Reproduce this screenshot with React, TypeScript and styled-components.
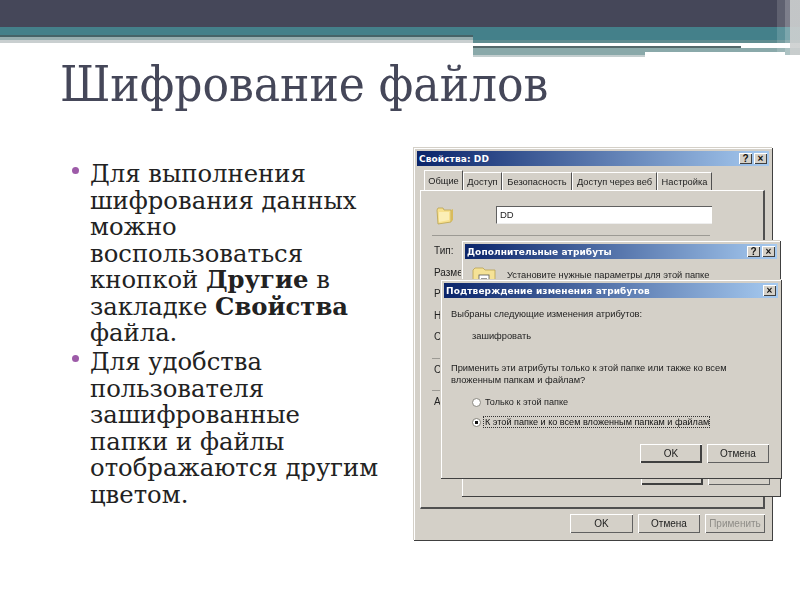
import React from 'react'
import styled, { createGlobalStyle } from 'styled-components'

const GlobalStyle = createGlobalStyle`
  html, body {
    margin: 0;
    padding: 0;
    width: 800px;
    height: 600px;
    overflow: hidden;
    background: #fff;
  }
`

const Slide = styled.div`
  width: 800px;
  height: 600px;
  overflow: hidden;
  background: #fff;
`

// top ribbon
const Ribbon = styled.header`
  position: relative;
  height: 57px;
`

const TopBand = styled.div`
  height: 27px;
  background: #454759;
`

const RibbonRow = styled.div`
  display: flex;
  align-items: flex-start;
`

const RibbonLeft = styled.div`
  width: 473px;
  flex: none;
`

const RibbonRight = styled.div`
  flex: 1;
`

const Band = styled.div<{ $h: number; $c: string; $w?: number; $ml?: number }>`
  height: ${({ $h }) => $h}px;
  background: ${({ $c }) => $c};
  width: ${({ $w }) => ($w ? `${$w}px` : 'auto')};
  margin-left: ${({ $ml }) => $ml || 0}px;
`

const LowerBand = styled.div`
  height: 7px;
  background: #8aa9aa;
  padding-top: 4px;
  box-sizing: border-box;
`

const RibbonEnd = styled.div`
  position: absolute;
  top: 0;
  right: 0;
  width: 23px;
  height: 55px;
  background: linear-gradient(90deg, rgba(255,255,255,.14) 0 8px, rgba(255,255,255,.3) 8px 13px, rgba(205,208,208,.92) 13px);
`

const Title = styled.h1`
  margin: 0;
  height: 91px;
  padding: 1px 0 0 60px;
  box-sizing: border-box;
  font-family: 'DejaVu Serif', serif;
  font-stretch: condensed;
  font-weight: 400;
  font-size: 49px;
  line-height: 54px;
  color: #454759;
`

const Content = styled.main`
  display: flex;
`

const TextColumn = styled.ul`
  width: 342px;
  flex: none;
  box-sizing: border-box;
  margin: 0;
  padding: 13px 32px 0 18px;
  margin-left: 72px;
  list-style: none;
  font-family: 'DejaVu Serif', serif;
  font-size: 24.3px;
  line-height: 26.5px;
  color: #222;
`

const Item = styled.li`
  position: relative;
  margin-bottom: 2.7px;

  &::before {
    content: '';
    position: absolute;
    left: -18px;
    top: 6px;
    width: 7px;
    height: 7px;
    border-radius: 50%;
    background: #9d5ba8;
  }
`

// dialogs
const Stage = styled.div`
  position: relative;
  width: 370px;
  height: 394px;
  font-family: 'Liberation Sans', sans-serif;
  font-size: 9.3px;
  color: #222;
  filter: blur(0.35px);
`

const Win = styled.section<{ $x: number; $y: number; $w: number; $h: number }>`
  position: absolute;
  left: ${({ $x }) => $x}px;
  top: ${({ $y }) => $y}px;
  width: ${({ $w }) => $w}px;
  height: ${({ $h }) => $h}px;
  box-sizing: border-box;
  padding: 3px;
  display: flex;
  flex-direction: column;
  background: #d4d0c8;
  border-right: 1px solid #404040;
  border-bottom: 1px solid #404040;
  box-shadow: inset 1px 1px 0 #fff, -1px -1px 0 #d4d0c8;
`

const TitleBar = styled.div`
  height: 15px;
  flex: none;
  display: flex;
  align-items: center;
  justify-content: flex-end;
  gap: 2px;
  padding: 0 2px;
  position: relative;
  background: linear-gradient(90deg, #0a246a, #a6caf0);
`

const TitleText = styled.span`
  margin-right: auto;
  font-family: 'DejaVu Sans', sans-serif;
  font-weight: 700;
  font-size: 9px;
  color: #fff;
  letter-spacing: 0.1px;
`

const TitleBtn = styled.span`
  width: 13px;
  height: 11px;
  display: flex;
  align-items: center;
  justify-content: center;
  font-family: 'Liberation Sans', sans-serif;
  font-weight: 700;
  font-size: 10px;
  line-height: 1;
  color: #111;
  background: #d4d0c8;
  box-shadow: inset 1px 1px 0 #fff, inset -1px -1px 0 #404040;
`

const Tabs = styled.div`
  display: flex;
  align-items: flex-end;
  height: 24px;
  padding: 5px 0 0 7px;
  box-sizing: border-box;
  flex: none;
`

const Tab = styled.div<{ $active?: boolean; $w: number }>`
  width: ${({ $w }) => $w}px;
  height: ${({ $active }) => ($active ? 20 : 18)}px;
  display: flex;
  align-items: center;
  justify-content: center;
  box-sizing: border-box;
  border-right: 1px solid #505050;
  border-top: 1px solid #fff;
  border-left: 1px solid #fff;
  white-space: nowrap;
`

const Panel = styled.div`
  flex: 1;
  margin: 0 4px 0 3px;
  padding: 14px 11px 0 11px;
  border-top: 1px solid #fff;
  border-left: 1px solid #fff;
  border-right: 2px solid #505050;
  border-bottom: 2px solid #505050;
`

const NameRow = styled.div`
  display: flex;
  align-items: center;
  gap: 41px;
  padding-left: 3px;
  height: 20px;
`

const NameInput = styled.div`
  width: 216px;
  height: 18px;
  box-sizing: border-box;
  padding: 2px 3px;
  background: #fff;
  border-top: 1px solid #606060;
  border-left: 1px solid #606060;
  border-bottom: 1px solid #eee;
  font-size: 9.5px;
`

const Rule = styled.hr<{ $w: number }>`
  width: ${({ $w }) => $w}px;
  height: 1px;
  margin: 10px 0 0;
  border: 0;
  background: #9c9a94;
`

const PropRow = styled.div`
  height: 21.5px;
  display: flex;
  align-items: center;
  padding-left: 2px;
  font-size: 10px;
`

const PropList = styled.div`
  margin-top: 4px;
`

const Buttons = styled.div<{ $pr: number; $pb: number }>`
  display: flex;
  justify-content: flex-end;
  gap: 5px;
  flex: none;
  padding: 0 ${({ $pr }) => $pr}px ${({ $pb }) => $pb}px 0;
`

const Btn = styled.div<{ $w: number; $off?: boolean; $def?: boolean }>`
  width: ${({ $w }) => $w}px;
  height: 19px;
  display: flex;
  align-items: center;
  justify-content: center;
  font-size: 10px;
  color: ${({ $off }) => ($off ? '#8f8d88' : '#222')};
  box-shadow: ${({ $def }) =>
    $def
      ? 'inset 1px 1px 0 #fff, inset -2px -2px 0 #404040'
      : 'inset 1px 1px 0 #fff, inset -1px -1px 0 #606060'};
`

const FooterGap = styled.div`
  height: 5px;
  flex: none;
`

const Spring = styled.div`
  flex: 1;
`

const Intro = styled.div`
  display: flex;
  align-items: center;
  gap: 10px;
  padding: 8px 0 0 6px;
`

const Body = styled.div`
  flex: 1;
  display: flex;
  flex-direction: column;
  padding: 10px 0 0 7px;
`

const Line = styled.p<{ $top?: number; $indent?: number }>`
  margin: ${({ $top }) => $top || 0}px 0 0 ${({ $indent }) => $indent || 0}px;
  line-height: 12px;
  white-space: nowrap;
`

const RadioRow = styled.div<{ $top: number }>`
  display: flex;
  align-items: center;
  gap: 3px;
  margin: ${({ $top }) => $top}px 0 0 21px;
  height: 14px;
`

const Radio = styled.span<{ $on?: boolean }>`
  width: 7px;
  height: 7px;
  flex: none;
  border-radius: 50%;
  background: ${({ $on }) =>
    $on ? 'radial-gradient(circle, #111 0 1.6px, #fff 2px)' : '#fff'};
  border: 1px solid #8a8880;
`

const RadioLabel = styled.span<{ $focus?: boolean }>`
  padding: 0 0 0 1px;
  outline: ${({ $focus }) => ($focus ? '1px dotted #333' : 'none')};
  white-space: nowrap;
  font-size: 9.1px;
  color: ${({ $focus }) => ($focus ? '#111' : '#222')};
`

function FolderIcon({ size }: { size: number }) {
  return (
    <svg width={size} height={size} viewBox="0 0 20 20">
      <path d="M2 5 L3 3 H8 L9 5 H16 L16 17 L3 19 Z" fill="#f7e08e" stroke="#b9a24e" strokeWidth="0.8" />
      <path d="M16 5 L18 4 V15 L16 17 Z" fill="#d8bb5c" />
      <path d="M4 7 H14 V15 L4 17 Z" fill="#fbeeb6" />
    </svg>
  )
}

function EncryptFolderIcon() {
  return (
    <svg width="26" height="16" viewBox="0 0 26 16">
      <path d="M2 3 L4 1 H12 L14 3 H24 V16 H2 Z" fill="#f5e296" stroke="#b9a24e" strokeWidth="0.8" />
      <rect x="8" y="8" width="10" height="8" fill="#fff" stroke="#555" strokeWidth="0.8" />
      <path d="M10 12 H16" stroke="#333" />
    </svg>
  )
}

export default function App() {
  return (
    <Slide>
      <GlobalStyle />
      <Ribbon>
        <TopBand />
        <RibbonRow>
          <RibbonLeft>
            <Band $h={8} $c="#44808a" />
            <Band $h={2} $c="#466368" />
            <Band $h={3} $c="#97aeb0" />
            <Band $h={3} $c="#c9cfd0" />
          </RibbonLeft>
          <RibbonRight>
            <Band $h={13} $c="#44808a" />
            <Band $h={3} $c="#5f8c90" />
            <Band $h={3} $c="#fff" $w={268} />
            <Band $h={2} $c="#54696b" $w={268} />
            <LowerBand>
              <Band $h={3} $c="#fff" $w={140} $ml={172} />
            </LowerBand>
            <Band $h={2} $c="#c4cecf" $w={172} />
          </RibbonRight>
        </RibbonRow>
        <RibbonEnd />
      </Ribbon>

      <Title>Шифрование файлов</Title>

      <Content>
        <TextColumn>
          <Item>
            Для выполнения шифрования данных можно воспользоваться кнопкой <b>Другие</b> в закладке{' '}
            <b>Свойства</b> файла.
          </Item>
          <Item>
            Для удобства пользователя зашифрованные папки и файлы отображаются другим цветом.
          </Item>
        </TextColumn>

        <Stage>
          <Win $x={0} $y={0} $w={359} $h={393}>
            <TitleBar>
              <TitleText>Свойства: DD</TitleText>
              <TitleBtn>?</TitleBtn>
              <TitleBtn>×</TitleBtn>
            </TitleBar>
            <Tabs>
              <Tab $active $w={39}>Общие</Tab>
              <Tab $w={39}>Доступ</Tab>
              <Tab $w={70}>Безопасность</Tab>
              <Tab $w={85}>Доступ через веб</Tab>
              <Tab $w={55}>Настройка</Tab>
            </Tabs>
            <Panel>
              <NameRow>
                <FolderIcon size={20} />
                <NameInput>DD</NameInput>
              </NameRow>
              <Rule $w={278} />
              <PropList>
                <PropRow>Тип:</PropRow>
                <PropRow>Разме</PropRow>
                <PropRow>Р</PropRow>
                <PropRow>Н</PropRow>
                <PropRow>С</PropRow>
                <Rule $w={12} />
                <PropRow>С</PropRow>
                <Rule $w={12} />
                <PropRow>А:</PropRow>
              </PropList>
            </Panel>
            <FooterGap />
            <Buttons $pr={4} $pb={4}>
              <Btn $w={63}>OK</Btn>
              <Btn $w={62}>Отмена</Btn>
              <Btn $w={60} $off>Применить</Btn>
            </Buttons>
          </Win>

          <Win $x={48} $y={93} $w={319} $h={256}>
            <TitleBar>
              <TitleText>Дополнительные атрибуты</TitleText>
              <TitleBtn>?</TitleBtn>
              <TitleBtn>×</TitleBtn>
            </TitleBar>
            <Intro>
              <EncryptFolderIcon />
              <span>Установите нужные параметры для этой папке</span>
            </Intro>
            <Spring />
            <Buttons $pr={7} $pb={8}>
              <Btn $w={62} $def>OK</Btn>
              <Btn $w={62}>Отмена</Btn>
            </Buttons>
          </Win>

          <Win $x={27} $y={132} $w={341} $h={199}>
            <TitleBar>
              <TitleText>Подтверждение изменения атрибутов</TitleText>
              <TitleBtn>×</TitleBtn>
            </TitleBar>
            <Body>
              <Line>Выбраны следующие изменения атрибутов:</Line>
              <Line $top={10} $indent={21}>зашифровать</Line>
              <Line $top={20}>Применить эти атрибуты только к этой папке или также ко всем</Line>
              <Line>вложенным папкам и файлам?</Line>
              <RadioRow $top={9}>
                <Radio />
                <RadioLabel>Только к этой папке</RadioLabel>
              </RadioRow>
              <RadioRow $top={6}>
                <Radio $on />
                <RadioLabel $focus>К этой папке и ко всем вложенным папкам и файлам</RadioLabel>
              </RadioRow>
              <Spring />
              <Buttons $pr={9} $pb={12}>
                <Btn $w={62} $def>OK</Btn>
                <Btn $w={62}>Отмена</Btn>
              </Buttons>
            </Body>
          </Win>
        </Stage>
      </Content>
    </Slide>
  )
}
